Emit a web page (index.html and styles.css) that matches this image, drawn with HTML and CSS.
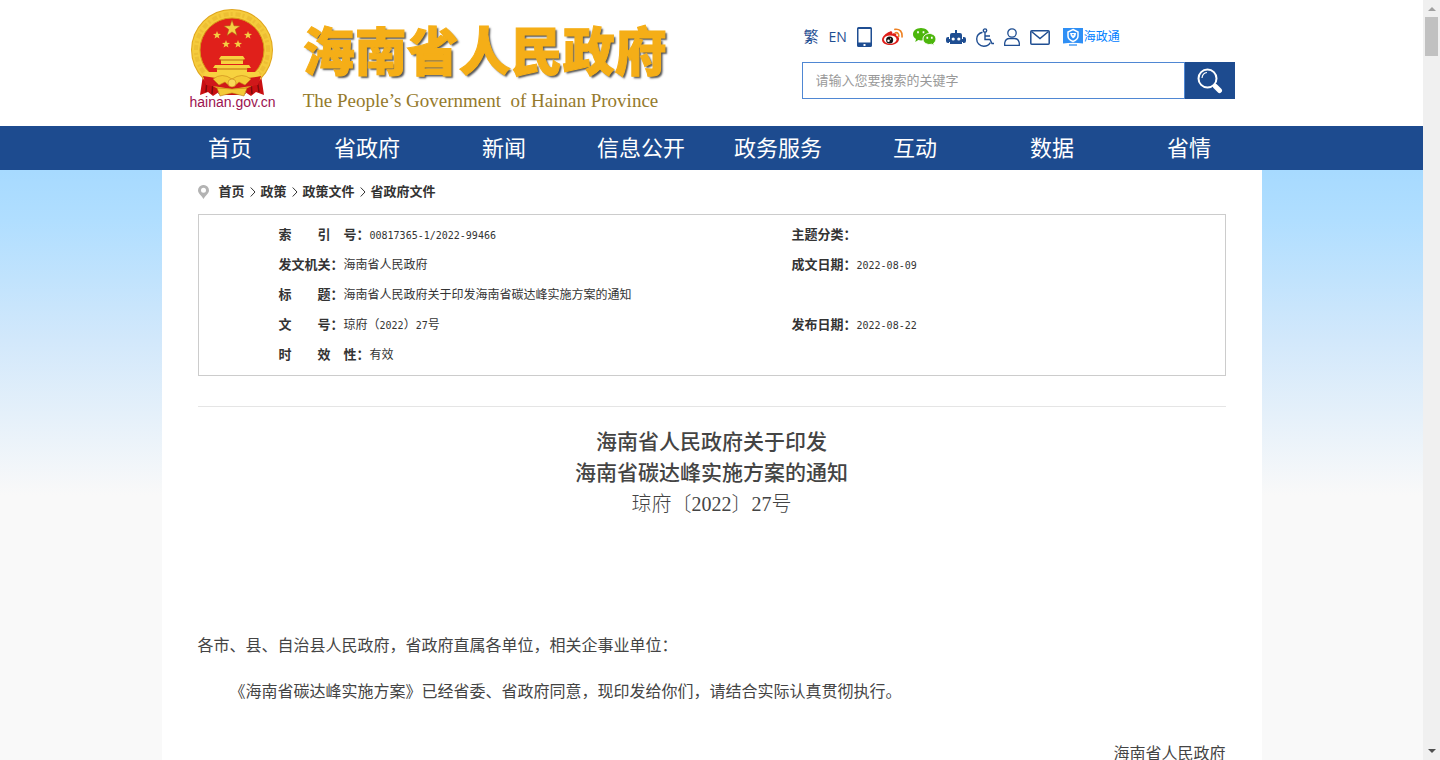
FILE: index.html
```html
<!DOCTYPE html>
<html lang="zh-CN">
<head>
<meta charset="utf-8">
<title>海南省人民政府关于印发海南省碳达峰实施方案的通知</title>
<link rel="stylesheet" href="styles.css">
</head>
<body>
<div class="viewport">
<div class="page">
  <header class="header">
    <a class="brand" href="#">
      <span class="emblem">
        <svg width="84" height="88" viewBox="0 0 84 88" aria-hidden="true">
          <path d="M13 66 10 86l8-3 5 4 6-4 7 3h12l7-3 6 4 5-4 8 3-3-20z" fill="#c90f12"/>
          <path d="M17 70l-1 13M23 73l-1 12M61 73l1 12M67 70l2 13M31 79l-2 6M53 79l2 6" stroke="#7d0b0c" stroke-width="1.5" fill="none"/>
          <circle cx="42" cy="41" r="41" fill="#dfa51c"/>
          <circle cx="42" cy="41" r="40" fill="#f5cb3c"/>
          <circle cx="42" cy="41" r="36" fill="none" stroke="#d79d1c" stroke-width="4" stroke-dasharray="2 3 5 2" opacity=".25"/>
          <circle cx="42" cy="41" r="32" fill="#e0201b" stroke="#d69a18"/>
          <path d="M42 11l2 5.800 6 .1-4.800 3.600 1.800 5.900-5-3.500-5 3.500 1.800-5.900-4.800-3.600 6-.1z" fill="#f5cf42" stroke="#a85a12" stroke-width=".5"/>
          <path id="s" d="M27 22l1 2.800 3 .1-2.400 1.800.9 2.900-2.500-1.700-2.500 1.700.9-2.900-2.400-1.800 3-.1z" fill="#f5cf42"/>
          <use href="#s" x="31"/><use href="#s" x="9" y="9"/><use href="#s" x="21" y="9"/>
          <path d="M31 47h22l2 3-2 1v4h-22v-4l-2-1zM25 56h34l2 3h-4v4h12l2 7H13l2-7h12v-4h-4z" fill="#f7d23f"/>
          <path d="M30 51h24M26 60h32" stroke="#b9690e" stroke-width="1"/>
          <path d="M13 67q29 6 58 0l-3 9-26 4-26-4z" fill="#d0181a"/>
          <path d="M23 70q9-7 19 0 10-7 19 0l-6 6-6-3q-7 8-14 0l-6 3z" fill="#f4ca38" stroke="#c78318" stroke-width=".6"/>
          <path d="M27 79l15 1 15-1-3 8-12-3-12 3z" fill="#f4ca38" stroke="#b9780f" stroke-width=".6"/>
          <circle cx="42" cy="74" r="4" fill="#f9d858" stroke="#c78318" stroke-width=".6"/>
        </svg>
        <span class="domain">hainan.gov.cn</span>
      </span>
      <span class="names">
        <span class="name-zh">海南省人民政府</span>
        <span class="name-en" lang="en">The People’s Government&nbsp; of Hainan Province</span>
      </span>
    </a>
    <div class="tools">
      <div class="links">
        <a href="#">繁</a>
        <a class="en" href="#">EN</a>
        <a href="#" aria-label="移动端"><svg width="15" height="20" viewBox="0 0 15 20"><path fill="#1f4e92" fill-rule="evenodd" d="M1.500 0h12q1.500 0 1.500 1.500v17q0 1.500-1.500 1.500h-12Q0 20 0 18.500v-17Q0 0 1.500 0zM1.500 2v13.500h12V2zM6.500 17h2v2h-2z"/></svg></a>
        <a href="#" aria-label="微博"><svg width="21" height="20" viewBox="0 0 22 20"><path fill="#df1f1a" d="M8 4.500c2-1 3.300-.2 2.600 2.200 2.800-1 5-.6 4.300 2 2 .6 3.100 1.800 3 3.500-.3 3.600-4.300 6.300-9 6.300C4 18.500 0 16.500 0 13 0 10 4 5.800 8 4.500z"/><ellipse cx="8.600" cy="12.700" rx="6.600" ry="4.400" fill="#fff"/><circle cx="8" cy="13.200" r="3.700" fill="#111"/><circle cx="6.800" cy="14" r="1.300" fill="#fff"/><circle cx="9" cy="12" r=".6" fill="#fff"/><path d="M14 5.500q4-.5 3.500 4M13.500 2q8-.8 7.500 8" fill="none" stroke="#ee8224" stroke-width="1.700" stroke-linecap="round"/></svg></a>
        <a href="#" aria-label="微信"><svg width="23" height="18" viewBox="0 0 23 18"><path fill="#4cb60c" d="M8 0c4.600 0 8 2.800 8 6.300S12.600 12.500 8 12.500c-1 0-1.900-.1-2.700-.4L2.300 14l.7-3C1.200 9.900 0 8.200 0 6.300 0 2.800 3.400 0 8 0z"/><path fill="#4cb60c" stroke="#fff" d="M16.500 5.500c3.600 0 6.500 2.500 6.500 5.500 0 1.700-.9 3.200-2.300 4.200l.4 2.300-2.500-1.300c-4.500 1.200-8.600-1.500-8.600-5.200 0-3 2.900-5.500 6.500-5.500z"/><path d="M5 3.300v2M10.500 3.300v2M14.300 8.700v2M18.800 8.700v2" stroke="#fff" stroke-width="1.700"/></svg></a>
        <a href="#" aria-label="智能机器人"><svg width="20" height="14" viewBox="0 0 20 14"><path fill="#1f4e92" d="M9 0h2v3h3q2 0 2 2v9H4V5q0-2 2-2h3zM3 7v6H2q-2 0-2-2V9q0-2 2-2zM17 7v6h1q2 0 2-2V9q0-2-2-2zM3 9h14v3H3z"/><circle cx="7.200" cy="9" r="1.600" fill="#fff"/><circle cx="12.800" cy="9" r="1.600" fill="#fff"/></svg></a>
        <a href="#" aria-label="无障碍"><svg width="18" height="19" viewBox="0 0 18 19" fill="none" stroke="#1f4e92" stroke-width="1.400"><circle cx="9" cy="2.600" r="1.700"/><path d="M9 4.500v7h5l2 4h2M9 8h5M6.500 4.200C2.500 5.200.7 8 .7 11c0 4 3 7.200 7 7.200 3 0 5.300-1.300 6.600-3.600"/></svg></a>
        <a href="#" aria-label="个人中心"><svg width="16" height="18" viewBox="0 0 16 18" fill="none" stroke="#1f4e92" stroke-width="1.300"><circle cx="8" cy="5" r="4.200"/><path d="M.7 17.300V15Q1.500 10.500 5.500 10.500h5Q14.500 10.500 15.300 15v2.300z"/></svg></a>
        <a href="#" aria-label="邮箱"><svg width="20" height="15" viewBox="0 0 20 15" fill="none" stroke="#1f4e92" stroke-width="1.500"><rect x=".8" y=".8" width="18.400" height="13.400" rx="1"/><path d="M1.500 1.500 10 8.500l8.500-7"/></svg></a>
        <a class="hzt" href="#"><svg width="20" height="19" viewBox="0 0 20 19" aria-hidden="true"><path fill="#2f8ff5" d="M0 0h20v15.500Q10 14 0 15.500z"/><path d="M10 1.500 15 4v4q0 3.500-5 5.500Q5 11.500 5 8V4z" fill="none" stroke="#fff" stroke-width="1.500"/><path d="M7 5h6q0 4-3 5.500Q7.500 9 7 5z" fill="#fff"/><path d="M9 6h2l-1 2z" fill="#2f8ff5"/><path d="M6 17h8" stroke="#78b6f8" stroke-width="2"/></svg>海政通</a>
      </div>
      <form class="search">
        <input class="search-box" type="text" placeholder="请输入您要搜索的关键字" aria-label="搜索关键字">
        <button class="search-btn" type="button" aria-label="搜索"><svg width="26" height="26" viewBox="0 0 26 26" fill="none" stroke="#fff"><circle cx="10.500" cy="10.500" r="9" stroke-width="2"/><path d="M5 10q.5-5 5-5.500" stroke-width="1.200"/><path d="M16.500 17l1.500 1.500" stroke-width="2.500"/><path d="M18.500 18.500l4 4" stroke-width="5" stroke-linecap="round"/></svg></button>
      </form>
    </div>
  </header>

  <nav class="nav">
    <div class="nav-list">
      <a href="#">首页</a><a href="#">省政府</a><a href="#">新闻</a><a href="#">信息公开</a><a href="#">政务服务</a><a href="#">互动</a><a href="#">数据</a><a href="#">省情</a>
    </div>
  </nav>

  <div class="backdrop">
    <main class="content">
      <div class="crumbs">
        <svg class="pin" width="11" height="14" viewBox="0 0 11 14" aria-hidden="true"><path fill="#b3b3b3" fill-rule="evenodd" d="M5.500 0A5.300 5.300 0 0 1 11 5.300C11 8.500 7.500 10.500 5.500 14 3.500 10.500 0 8.500 0 5.300A5.300 5.300 0 0 1 5.500 0zm0 2.800a2.500 2.500 0 1 0 0 5 2.500 2.500 0 0 0 0-5z"/></svg>
        <a href="#">首页</a><svg class="sep" width="6" height="10" viewBox="0 0 6 10"><path d="M.7.5 5 5 .7 9.500"/></svg>
        <a href="#">政策</a><svg class="sep" width="6" height="10" viewBox="0 0 6 10"><path d="M.7.5 5 5 .7 9.500"/></svg>
        <a href="#">政策文件</a><svg class="sep" width="6" height="10" viewBox="0 0 6 10"><path d="M.7.5 5 5 .7 9.500"/></svg>
        <a href="#">省政府文件</a>
      </div>
      <div class="info">
        <table class="meta">
          <tr><td><b>索　　引　号：</b><span class="num">00817365-1/2022-99466</span></td><td><b>主题分类：</b></td></tr>
          <tr><td><b>发文机关：</b>海南省人民政府</td><td><b>成文日期：</b><span class="num">2022-08-09</span></td></tr>
          <tr><td colspan="2"><b>标　　题：</b>海南省人民政府关于印发海南省碳达峰实施方案的通知</td></tr>
          <tr><td><b>文　　号：</b>琼府（<span class="num">2022</span>）<span class="num">27</span>号</td><td><b>发布日期：</b><span class="num">2022-08-22</span></td></tr>
          <tr><td><b>时　　效　性：</b>有效</td><td></td></tr>
        </table>
      </div>
      <article class="article">
        <h1 class="title">海南省人民政府关于印发<br>海南省碳达峰实施方案的通知</h1>
        <p class="doc-no">琼府〔2022〕27号</p>
        <div class="body">
          <p>各市、县、自治县人民政府，省政府直属各单位，相关企事业单位：</p>
          <p class="indent">《海南省碳达峰实施方案》已经省委、省政府同意，现印发给你们，请结合实际认真贯彻执行。</p>
          <p class="sign">海南省人民政府</p>
        </div>
      </article>
    </main>
  </div>
</div>
<div class="scrollbar" aria-hidden="true">
  <span class="arrow up"></span>
  <span class="thumb"></span>
  <span class="arrow down"></span>
</div>
</div>
</body>
</html>
```
FILE: styles.css
```css
* { box-sizing: border-box; }
body {
  margin: 0;
  color: #333;
  font: 12px/30px "Liberation Sans", "Noto Sans CJK SC", sans-serif;
}
a { color: inherit; text-decoration: none; }
p, h1 { margin: 0; }
svg { display: block; flex: none; }

.viewport { display: flex; height: 100vh; overflow: hidden; }
.page { flex: 1; min-width: 0; background: #fff; }

.header {
  display: flex;
  justify-content: space-between;
  max-width: 1100px;
  min-height: 126px;
  margin: 0 auto;
  padding: 0 27px 0 28px;
}
.brand { display: flex; gap: 27px; padding-top: 9px; }
.emblem { display: flex; flex-direction: column; }
.domain { color: #9c1350; font-size: 14px; line-height: 10px; }
.names { display: flex; flex-direction: column; gap: 10px; padding-top: 10px; }
.name-zh {
  color: #f5ae17;
  font-family: "Noto Sans CJK SC", sans-serif;
  font-size: 52px;
  font-weight: 900;
  line-height: 60px;
  -webkit-text-stroke: 1px #f5ae17;
  text-shadow: 2px 2px 2px #555;
}
.name-en {
  color: #957a2c;
  font-family: "Liberation Serif", serif;
  font-size: 19px;
  line-height: 24px;
}

.tools { width: 433px; padding-top: 27px; }
.links {
  display: flex;
  align-items: center;
  gap: 10px;
  height: 20px;
  margin-bottom: 15px;
  padding-left: 2px;
  color: #1f4e92;
  font-size: 15px;
  line-height: 20px;
}
.en { font-family: "Open Sans", sans-serif; font-size: 14px; }
.hzt {
  display: flex;
  align-items: center;
  gap: 1px;
  margin-left: 3px;
  color: #0080ff;
  font-size: 12px;
}
.search { display: flex; height: 37px; }
.search-box {
  flex: 1;
  min-width: 0;
  border: 1px solid #4f87d3;
  padding: 0 13px 2px;
  font: 13px "Noto Sans CJK SC", sans-serif;
}
.search-box::placeholder { color: #999; }
.search-btn {
  display: grid;
  place-items: center;
  width: 50px;
  border: 0;
  padding: 0;
  background: #1d4b8f;
}

.nav { background: #1d4b8f; }
.nav-list {
  display: grid;
  grid-template-columns: repeat(8, 1fr);
  max-width: 1100px;
  margin: 0 auto;
  padding: 2px 4px 0 0;
  color: #fff;
  font-size: 22px;
  line-height: 42px;
  text-align: center;
}

.backdrop {
  background: linear-gradient(#a7daff, #b0deff 50px, #d2e8fb 170px, #f9f9f9 325px);
}
.content {
  max-width: 1100px;
  min-height: 600px;
  margin: 0 auto;
  padding: 0 36px;
  background: #fff;
}
.crumbs {
  display: flex;
  align-items: center;
  gap: 5px;
  height: 44px;
  font-size: 13px;
  font-weight: bold;
}
.pin { margin-right: 5px; }
.sep { fill: none; stroke: #333; }

.info { border: 1px solid #ccc; padding: 5px 0; }
.meta { width: 100%; border-collapse: collapse; table-layout: fixed; }
.meta td { height: 30px; padding: 0 0 0 80px; line-height: 30px; }
.meta b { font-size: 13px; line-height: 1; }
.num { font-family: "DejaVu Sans Mono", monospace; font-size: 10px; line-height: 1; }

.article { margin-top: 30px; border-top: 1px solid #e5e5e5; padding-top: 19px; color: #444; }
.title { font-size: 21px; font-weight: 500; line-height: 31px; text-align: center; }
.doc-no {
  font-family: "Liberation Serif", "Noto Sans CJK SC", serif;
  font-size: 20px;
  font-weight: 300;
  line-height: 33px;
  text-align: center;
}
.body { padding-top: 110px; font-size: 16px; line-height: 30px; }
.indent { margin-top: 16px; text-indent: 32px; }
.sign { margin-top: 32px; text-align: right; }

.scrollbar {
  display: flex;
  flex-direction: column;
  align-items: center;
  width: 17px;
  padding: 7px 0;
  background: #f0f0f0;
}
.arrow { border: 4px solid transparent; border-top-width: 0; border-bottom: 4px solid #a0a0a0; }
.thumb { width: 13px; height: 39px; margin: 6px 0 auto; background: #c1c1c1; }
.down { border-top: 4px solid #505050; border-bottom-width: 0; }
```
